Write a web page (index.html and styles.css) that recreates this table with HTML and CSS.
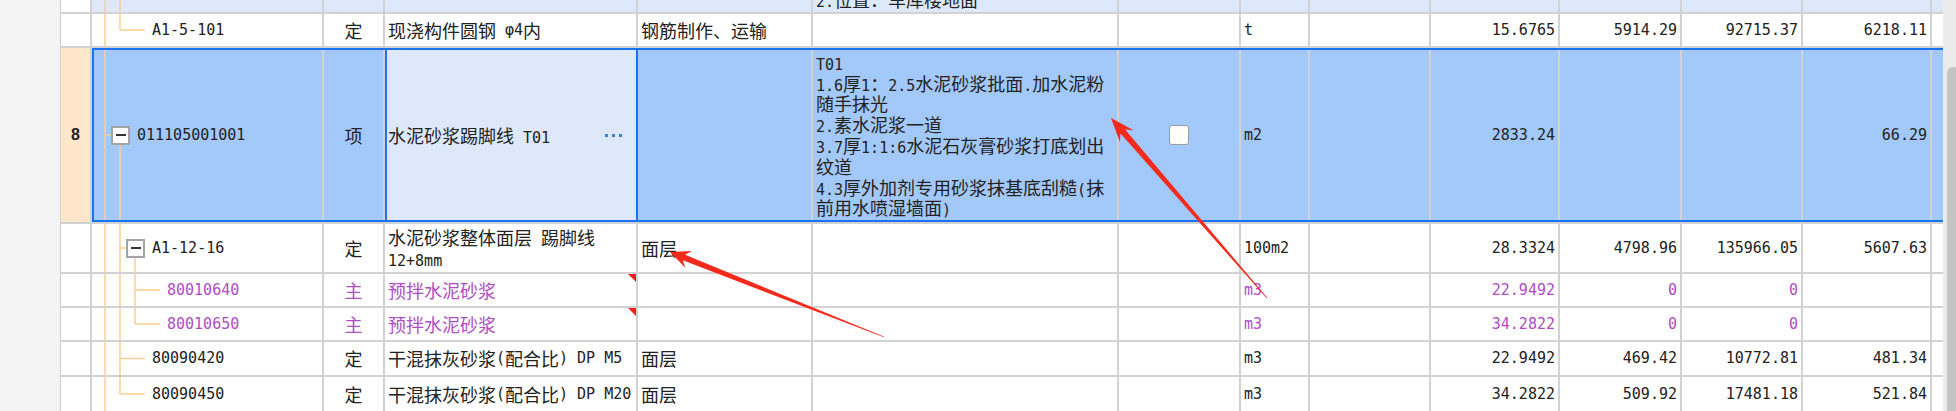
FILE: index.html
```html
<!DOCTYPE html>
<html lang="zh-CN">
<head>
<meta charset="utf-8">
<title>清单</title>
<link rel="stylesheet" href="styles.css">
</head>
<body>
<div class="screen">
  <div class="gutter"></div>
  <div class="sheet">

    <!-- partial row at top -->
    <div class="row r0 tint">
      <div class="rownum blank"></div>
      <div class="code">
        <svg class="tree" width="232" height="12"><line x1="13" y1="0" x2="13" y2="12"/><line x1="28" y1="0" x2="28" y2="12"/></svg>
      </div>
      <div></div><div></div><div></div>
      <div class="desc clip"><span><span class="n">2.</span>位置：车库楼地面</span></div>
      <div></div><div></div><div></div><div></div><div></div><div></div><div></div><div></div>
    </div>

    <div class="row r1">
      <div class="rownum"></div>
      <div class="code lv2">
        <svg class="tree" width="232" height="32"><line x1="13" y1="0" x2="13" y2="32"/><line x1="28" y1="0" x2="28" y2="16"/><line x1="28" y1="16" x2="53" y2="16"/></svg>
        <span class="n txt">A1-5-101</span>
      </div>
      <div class="type">定</div>
      <div class="name">现浇构件圆钢<span class="n">&nbsp;φ4</span>内</div>
      <div class="work">钢筋制作、运输</div>
      <div class="desc"></div>
      <div></div>
      <div class="unit n">t</div>
      <div></div>
      <div class="num">15.6765</div>
      <div class="num">5914.29</div>
      <div class="num">92715.37</div>
      <div class="num">6218.11</div>
      <div></div>
    </div>

    <div class="row r8 sel">
      <div class="rownum cur">8</div>
      <div class="code lv1">
        <svg class="tree" width="232" height="174"><line x1="13" y1="0" x2="13" y2="174"/><line x1="13" y1="87" x2="19" y2="87"/><line x1="28" y1="96" x2="28" y2="174"/></svg>
        <span class="tog"></span><span class="n txt">011105001001</span>
      </div>
      <div class="type">项</div>
      <div class="name focus"><span>水泥砂浆踢脚线<span class="n">&nbsp;T01</span></span>
        <svg class="more" width="18" height="3"><rect x="0" y="0" width="3" height="3"/><rect x="7" y="0" width="3" height="3"/><rect x="14" y="0" width="3" height="3"/></svg>
      </div>
      <div class="work"></div>
      <div class="desc lines">
        <div><span class="n">T01</span></div>
        <div><span class="n">1.6</span>厚<span class="n">1</span>：<span class="n">2.5</span>水泥砂浆批面<span class="n">.</span>加水泥粉</div>
        <div>随手抹光</div>
        <div><span class="n">2.</span>素水泥浆一道</div>
        <div><span class="n">3.7</span>厚<span class="n">1:1:6</span>水泥石灰膏砂浆打底划出</div>
        <div>纹道</div>
        <div><span class="n">4.3</span>厚外加剂专用砂浆抹基底刮糙<span class="n">(</span>抹</div>
        <div>前用水喷湿墙面<span class="n">)</span></div>
      </div>
      <div class="check"><span class="chk"></span></div>
      <div class="unit n">m2</div>
      <div></div>
      <div class="num">2833.24</div>
      <div class="num"></div>
      <div class="num"></div>
      <div class="num">66.29</div>
      <div></div>
    </div>

    <div class="row r9">
      <div class="rownum"></div>
      <div class="code lv2b">
        <svg class="tree" width="232" height="48"><line x1="13" y1="0" x2="13" y2="48"/><line x1="28" y1="0" x2="28" y2="48"/><line x1="28" y1="24" x2="34" y2="24"/><line x1="43" y1="33" x2="43" y2="48"/></svg>
        <span class="tog"></span><span class="n txt">A1-12-16</span>
      </div>
      <div class="type">定</div>
      <div class="name lines">
        <div>水泥砂浆整体面层<span class="n">&nbsp;</span>踢脚线</div>
        <div><span class="n">12+8mm</span></div>
      </div>
      <div class="work">面层</div>
      <div class="desc"></div>
      <div></div>
      <div class="unit n">100m2</div>
      <div></div>
      <div class="num">28.3324</div>
      <div class="num">4798.96</div>
      <div class="num">135966.05</div>
      <div class="num">5607.63</div>
      <div></div>
    </div>

    <div class="row r10 pur">
      <div class="rownum"></div>
      <div class="code lv3">
        <svg class="tree" width="232" height="32"><line x1="13" y1="0" x2="13" y2="32"/><line x1="28" y1="0" x2="28" y2="32"/><line x1="43" y1="0" x2="43" y2="32"/><line x1="43" y1="16" x2="68" y2="16"/></svg>
        <span class="n txt">80010640</span>
      </div>
      <div class="type">主</div>
      <div class="name mark">预拌水泥砂浆</div>
      <div class="work"></div>
      <div class="desc"></div>
      <div></div>
      <div class="unit n">m3</div>
      <div></div>
      <div class="num">22.9492</div>
      <div class="num">0</div>
      <div class="num">0</div>
      <div class="num"></div>
      <div></div>
    </div>

    <div class="row r11 pur">
      <div class="rownum"></div>
      <div class="code lv3">
        <svg class="tree" width="232" height="32"><line x1="13" y1="0" x2="13" y2="32"/><line x1="28" y1="0" x2="28" y2="32"/><line x1="43" y1="0" x2="43" y2="16"/><line x1="43" y1="16" x2="68" y2="16"/></svg>
        <span class="n txt">80010650</span>
      </div>
      <div class="type">主</div>
      <div class="name mark">预拌水泥砂浆</div>
      <div class="work"></div>
      <div class="desc"></div>
      <div></div>
      <div class="unit n">m3</div>
      <div></div>
      <div class="num">34.2822</div>
      <div class="num">0</div>
      <div class="num">0</div>
      <div class="num"></div>
      <div></div>
    </div>

    <div class="row r12">
      <div class="rownum"></div>
      <div class="code lv2">
        <svg class="tree" width="232" height="33"><line x1="13" y1="0" x2="13" y2="33"/><line x1="28" y1="0" x2="28" y2="33"/><line x1="28" y1="16.5" x2="53" y2="16.5"/></svg>
        <span class="n txt">80090420</span>
      </div>
      <div class="type">定</div>
      <div class="name">干混抹灰砂浆<span class="n">(</span>配合比<span class="n">)&nbsp;DP&nbsp;M5</span></div>
      <div class="work">面层</div>
      <div class="desc"></div>
      <div></div>
      <div class="unit n">m3</div>
      <div></div>
      <div class="num">22.9492</div>
      <div class="num">469.42</div>
      <div class="num">10772.81</div>
      <div class="num">481.34</div>
      <div></div>
    </div>

    <div class="row r13">
      <div class="rownum"></div>
      <div class="code lv2">
        <svg class="tree" width="232" height="34"><line x1="13" y1="0" x2="13" y2="34"/><line x1="28" y1="0" x2="28" y2="17"/><line x1="28" y1="17" x2="53" y2="17"/></svg>
        <span class="n txt">80090450</span>
      </div>
      <div class="type">定</div>
      <div class="name">干混抹灰砂浆<span class="n">(</span>配合比<span class="n">)&nbsp;DP&nbsp;M20</span></div>
      <div class="work">面层</div>
      <div class="desc"></div>
      <div></div>
      <div class="unit n">m3</div>
      <div></div>
      <div class="num">34.2822</div>
      <div class="num">509.92</div>
      <div class="num">17481.18</div>
      <div class="num">521.84</div>
      <div></div>
    </div>

  </div>
  <div class="scrollbar"><div class="thumb"></div></div>

  <svg class="marks" width="1956" height="411" viewBox="0 0 1956 411">
    <polygon points="1111,118 1133.5,130.2 1125.1,129.6 1267.3,297.7 1266.7,298.3 1120.5,133.6 1119.9,142"/>
    <polygon points="670,252 691.9,251 685.1,254.8 884.15,336.63 883.85,337.37 682.8,260.3 685.3,267.7"/>
  </svg>
</div>
</body>
</html>
```

FILE: styles.css
```css
* { box-sizing: border-box; }

html, body {
  margin: 0;
  padding: 0;
  background: #ffffff;
}

body {
  font-family: "Noto Sans CJK SC", "Noto Sans", sans-serif;
  font-size: 18px;
  line-height: 20.8px;
  color: #222222;
}

.screen {
  position: relative;
  display: flex;
  width: 1956px;
  height: 411px;
  overflow: hidden;
}

.gutter {
  flex: 0 0 61px;
  background: #f3f3f3;
  border-right: 1px solid #cfcfcf;
}

.sheet {
  flex: 0 0 1882px;
  display: flex;
  flex-direction: column;
}

.row {
  flex: none;
  display: grid;
  grid-template-columns: 31px 232px 61px 253px 175px 306px 122px 69px 121px 129px 122px 121px 129px 11px;
  grid-template-rows: minmax(0, 1fr);
  border-bottom: 2px solid #d2d2d2;
  background: #ffffff;
}

.row > div {
  position: relative;
  display: flex;
  align-items: center;
  min-width: 0;
  overflow: hidden;
  white-space: nowrap;
  padding: 0 3px;
  border-right: 2px solid #d2d2d2;
}

.row > div:last-child { border-right: none; }

.r0 { height: 14px; }
.r1 { height: 34px; }
.r8 { height: 176px; }
.r9 { height: 50px; }
.r10 { height: 34px; }
.r11 { height: 34px; }
.r12 { height: 35px; }
.r13 { height: 36px; }

.tint { background: #dde9fb; }
.tint .blank { background: #ffffff; }

.n {
  font-family: "DejaVu Sans Mono", "Liberation Mono", monospace;
  font-size: 15px;
  line-height: 1;
}

.rownum {
  justify-content: center;
  font-family: "Liberation Sans", Arial, sans-serif;
  font-weight: bold;
  font-size: 16px;
  color: #222;
}

.rownum.cur { background: #fde6c9; }

/* tree column */
.code { padding: 0; }
.tree {
  position: absolute;
  left: 0;
  top: 0;
  stroke: #fbcd95;
  stroke-width: 1.5;
  fill: none;
}
.code .txt,
.code .tog { position: relative; }
.lv1 { padding-left: 19px !important; }
.lv2b { padding-left: 34px !important; }
.lv2 { padding-left: 60px !important; }
.lv3 { padding-left: 75px !important; }

.tog {
  flex: none;
  width: 19px;
  height: 19px;
  margin-right: 7px;
  background: #ffffff;
  border: 2px solid #a4a4a4;
  display: flex;
  align-items: center;
  justify-content: center;
}
.tog::after {
  content: "";
  width: 10px;
  height: 2px;
  background: #333;
}

.type { justify-content: center; }

.name.lines,
.desc.lines {
  flex-direction: column;
  align-items: flex-start;
  justify-content: center;
}

.lines > div {
  height: 20.8px;
  line-height: 20.8px;
  flex: none;
}

.focus {
  background: #dde9fb;
  justify-content: space-between;
  padding-right: 13px !important;
  border-right-color: #1a73f5 !important;
  box-shadow: inset 2px 0 0 #1a73f5;
}
.more { fill: #3b82d6; flex: none; }

.mark::after {
  content: "";
  position: absolute;
  top: 0;
  right: 0;
  border-top: 8px solid #f21c1c;
  border-left: 8px solid transparent;
}

.clip { align-items: flex-start !important; }
.clip > span { margin-top: -11.5px; }

.check { justify-content: center; }
.chk {
  width: 20px;
  height: 20px;
  background: #ffffff;
  border: 1px solid #9c9c9c;
  border-radius: 3px;
}

.num {
  justify-content: flex-end;
  font-family: "DejaVu Sans Mono", "Liberation Mono", monospace;
  font-size: 15px;
}

.sel { position: relative; background: #a3c9fa; }
.sel::after {
  content: "";
  position: absolute;
  left: 31px;
  right: 0;
  top: 0;
  bottom: 0;
  border: 2px solid #1a73f5;
  border-right: none;
  pointer-events: none;
}

.pur { color: #b04cc6; }

.scrollbar {
  flex: 0 0 13px;
  background: #ebebeb;
  display: flex;
  flex-direction: column;
}
.thumb {
  margin-top: 67px;
  margin-left: 4px;
  width: 12px;
  flex: 1;
  background: #c4c4c4;
  border-radius: 6px 6px 0 0;
}

.marks {
  position: absolute;
  left: 0;
  top: 0;
  pointer-events: none;
  fill: #f42a1c;
}
```
